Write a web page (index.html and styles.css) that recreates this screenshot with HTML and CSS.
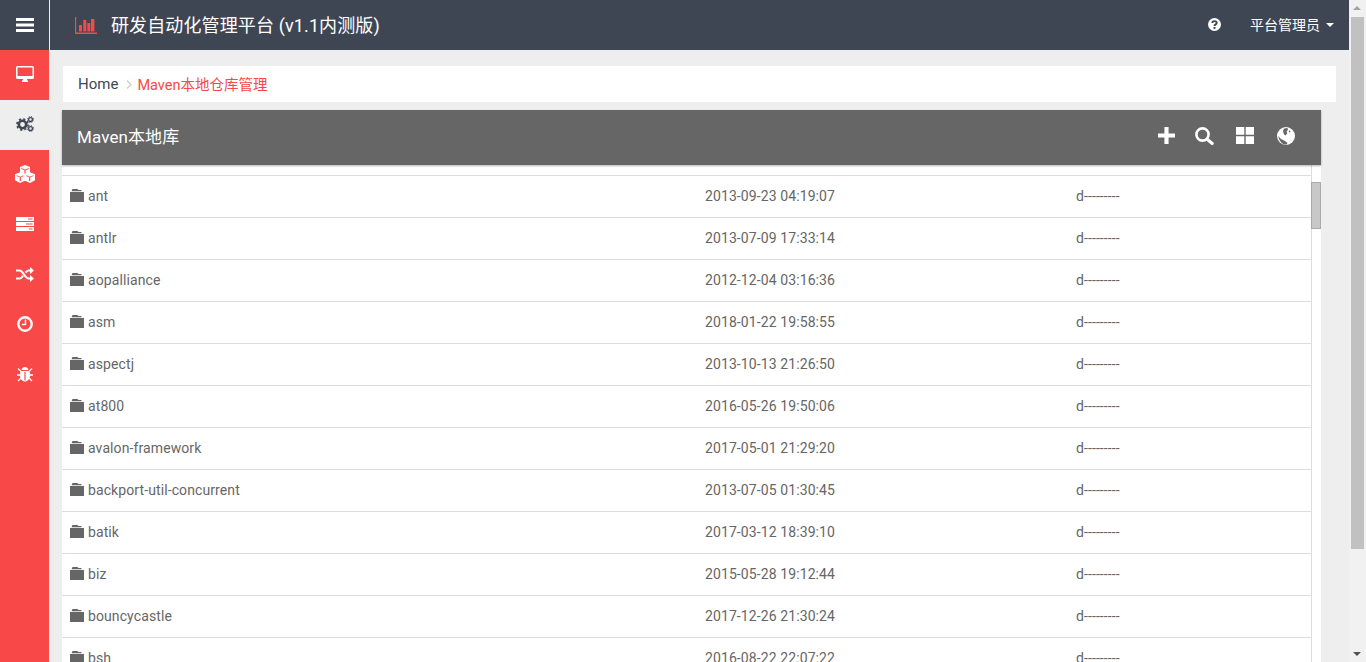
FILE: index.html
```html
<!DOCTYPE html>
<html lang="zh-CN">
<head>
<meta charset="UTF-8">
<meta name="viewport" content="width=device-width, initial-scale=1.0">
<title>研发自动化管理平台</title>
<link rel="stylesheet" href="styles.css">
</head>
<body>
<div class="page">
  <div class="main">
    <header class="topbar">
      <a class="toggle">
        <svg width="18" height="14" viewBox="0 0 18 14"><path fill="#fff" d="M0 0h18v3H0zM0 5.500h18v3H0zM0 11h18v3H0z"/></svg>
      </a>
      <div class="brand">
        <svg width="22" height="17" viewBox="0 0 22 17"><path fill="#f94848" d="M0 0h1.200v15.600H22V17H0z"/><path fill="#f94848" d="M4 8h3v6.600H4zM8.300 3h3v11.600h-3zM12.300 6h3v8.600h-3zM16 2h3.400v12.600H16z"/></svg>
        <h1>研发自动化管理平台 (v1.1内测版)</h1>
      </div>
      <div class="topright">
        <svg width="13" height="13" viewBox="0 0 13 13"><circle cx="6.500" cy="6.500" r="6.500" fill="#fff"/><path fill="none" stroke="#3f4653" stroke-width="1.900" d="M4.300 5.100c0-1.300 1-2 2.200-2s2.200.7 2.200 1.800c0 1.500-2.200 1.400-2.200 3"/><path fill="#3f4653" d="M5.500 9h2v1.900h-2z"/></svg>
        <span class="user">平台管理员</span>
        <span class="caret"></span>
      </div>
    </header>

    <div class="body">
      <nav class="sidebar">
        <a class="navitem">
          <svg width="18" height="16" viewBox="0 0 18 16"><path fill="#fff" fill-rule="evenodd" d="M1.500 0h15A1.500 1.500 0 0 1 18 1.500v10a1.500 1.500 0 0 1-1.500 1.500H11c0 1 .4 1.500 1 2v1H6v-1c.6-.5 1-1 1-2H1.500A1.500 1.500 0 0 1 0 11.500v-10A1.500 1.500 0 0 1 1.500 0zM1.500 1.500V10h15V1.500z"/></svg>
        </a>
        <a class="navitem current">
          <svg width="18" height="16" viewBox="0 0 18 16"><g fill="none" stroke="#3f4653"><circle cx="6.500" cy="8.500" r="3.700" stroke-width="2.600"/><circle cx="6.500" cy="8.500" r="5.600" stroke-width="1.600" stroke-dasharray="2.200 2.200"/><circle cx="14.500" cy="3.500" r="1.900" stroke-width="1.300"/><circle cx="14.500" cy="3.500" r="3" stroke-width="1" stroke-dasharray="1.200 1.160"/><circle cx="14.500" cy="12.500" r="1.900" stroke-width="1.300"/><circle cx="14.500" cy="12.500" r="3" stroke-width="1" stroke-dasharray="1.200 1.160"/></g></svg>
        </a>
        <a class="navitem">
          <svg width="20" height="18" viewBox="0 0 20 18"><path fill="#fff" d="M10 0l5 2v5.200l5 2v6L15 18l-5-2.200L5 18l-5-2.800v-6l5-2V2z"/><path fill="#f94848" d="M6.300 3.100L10 4.600l3.700-1.500v.9L10.600 5.300v3.200H9.400V5.300L6.300 4zM1.500 10.200l3.800 1.500 3.200-1.400v.9l-2.600 1.100v3.800H4.700v-3.800l-3.200-1.200zM11.500 10.300l3.200 1.400 3.800-1.500v.9l-3.200 1.200v3.800h-1.200v-3.800l-2.600-1.100z"/></svg>
        </a>
        <a class="navitem">
          <svg width="18" height="14" viewBox="0 0 18 14"><path fill="#fff" d="M0 0h18v4H0zM0 5h18v4H0zM0 10h18v4H0z"/><path fill="#f94848" d="M12 1.500h4.500v1H12zM10 6.500h6.500v1H10zM13 11.500h3.500v1H13z"/></svg>
        </a>
        <a class="navitem">
          <svg width="18" height="15" viewBox="0 0 18 15"><path fill="none" stroke="#fff" stroke-width="2.200" d="M0 3.500h3.500c3.500 0 5.500 8 9 8H15M0 11.500h3.500c1.500 0 2.600-1.300 3.500-2.800M9.400 5.600C10.300 4.500 11.300 3.500 12.500 3.500H15"/><path fill="#fff" d="M14 0l4 3.500-4 3.500zM14 8l4 3.500-4 3.500z"/></svg>
        </a>
        <a class="navitem">
          <svg width="16" height="16" viewBox="0 0 16 16"><circle cx="8" cy="8" r="6.700" fill="none" stroke="#fff" stroke-width="2.400"/><path fill="#fff" d="M7.800 3.500h1.400v5.700H4.800V7.800h3z"/></svg>
        </a>
        <a class="navitem">
          <svg width="16" height="16" viewBox="0 0 16 16"><path fill="#fff" d="M4.500 4C5 1.800 6.400 1 8 1s3 .8 3.500 3zM4 5h8c.8.5 1 2 1 4.500 0 3.500-2.500 6-5 6s-5-2.500-5-6C3 7 3.200 5.500 4 5z"/><path fill="none" stroke="#fff" stroke-width="1.300" d="M1 2.500L4 5.500M15 2.500L12 5.500M0 9h3M13 9h3M1 15l3-3M15 15l-3-3"/><path fill="#f94848" d="M7.400 6h1.200v8.500H7.400z"/></svg>
        </a>
      </nav>

      <section class="content">
        <div class="crumbs">
          <span class="home">Home</span>
          <svg class="sep" width="6" height="9" viewBox="0 0 6 9"><path fill="none" stroke="#ccc" stroke-width="1.200" d="M1 .5l4 4-4 4"/></svg>
          <span class="here">Maven本地仓库管理</span>
        </div>

        <div class="panel">
          <div class="panel-head">
            <h2>Maven本地库</h2>
            <div class="tools">
              <svg width="17" height="17" viewBox="0 0 18 18"><path fill="#fff" d="M6.800 0h4.400v6.800H18v4.400h-6.800V18H6.800v-6.800H0V6.800h6.800z"/></svg>
              <svg width="19" height="18" viewBox="0 0 19 18"><circle cx="7.500" cy="7.500" r="6.100" fill="none" stroke="#fff" stroke-width="2.600"/><path fill="none" stroke="#fff" stroke-width="3" stroke-linecap="round" d="M12.500 12.500l4.700 4"/></svg>
              <svg class="tool-grid" width="18" height="17" viewBox="0 0 18 17"><path fill="#fff" d="M0 0h8.300v7.800H0zM9.700 0H18v7.800H9.700zM0 9.200h8.300V17H0zM9.700 9.200H18V17H9.700z"/></svg>
              <svg class="tool-globe" width="18" height="18" viewBox="0 0 18 18"><circle cx="9" cy="9" r="9" fill="#fff"/><path fill="#666" d="M7 1.500l3.500-.6.500 2-1.500 1.300.8 2-1.800 2.300-1.700-1.500-.8-3zM1.200 9l2.800 3 4 2 2.500 2-1 1.600C5.500 17.800 2 14 1.200 9zM12 3.500l1.500.5-.5 1.500-1.200-.6z"/></svg>
            </div>
          </div>

          <div class="listwrap">
            <div class="list" id="list"></div>
            <div class="inner-scroll"><div class="inner-thumb"></div></div>
          </div>
        </div>
      </section>
    </div>
  </div>

  <div class="pagescroll">
    <span class="arrow up"></span>
    <div class="pagethumb"></div>
    <span class="arrow down"></span>
  </div>
</div>

<script>
  var rows = [
    ["ant", "2013-09-23 04:19:07"],
    ["antlr", "2013-07-09 17:33:14"],
    ["aopalliance", "2012-12-04 03:16:36"],
    ["asm", "2018-01-22 19:58:55"],
    ["aspectj", "2013-10-13 21:26:50"],
    ["at800", "2016-05-26 19:50:06"],
    ["avalon-framework", "2017-05-01 21:29:20"],
    ["backport-util-concurrent", "2013-07-05 01:30:45"],
    ["batik", "2017-03-12 18:39:10"],
    ["biz", "2015-05-28 19:12:44"],
    ["bouncycastle", "2017-12-26 21:30:24"],
    ["bsh", "2016-08-22 22:07:22"]
  ];
  var folder = '<svg class="folder" width="14" height="13" viewBox="0 0 14 13"><path fill="#666" d="M2.500 0h5l1 1h3v1.200H1.500zM0 3h14v9.500a.5.500 0 0 1-.5.500H.5a.5.500 0 0 1-.5-.5z"/></svg>';
  var html = "";
  rows.forEach(function(r) {
    html += '<div class="row"><div class="name">' + folder + '<span>' + r[0] + '</span></div>' +
      '<div>' + r[1] + '</div><div>d---------</div></div>';
  });
  document.getElementById("list").innerHTML = html;
</script>
</body>
</html>
```

FILE: styles.css
```css
* {
  box-sizing: border-box;
}

html, body {
  margin: 0;
  height: 100%;
  overflow: hidden;
}

body {
  font-family: Roboto, "Noto Sans CJK SC", sans-serif;
  font-size: 14px;
  color: #666;
  background-color: #eee;
}

h1, h2 {
  margin: 0;
  font-weight: 400;
}

.page {
  display: flex;
  height: 662px;
}

.main {
  flex: 1;
  min-width: 0;
  display: flex;
  flex-direction: column;
}

/* top bar */
.topbar {
  height: 50px;
  flex: none;
  display: flex;
  align-items: center;
  background-color: #3f4653;
  color: white;
}

.toggle {
  width: 50px;
  height: 50px;
  display: flex;
  align-items: center;
  justify-content: center;
  border-right: 1px solid #eee;
}

.brand {
  display: flex;
  align-items: center;
  gap: 14px;
  margin-left: 25px;
}

.brand h1 {
  font-size: 18px;
  letter-spacing: 0.12px;
  padding-bottom: 2px;
}

.topright {
  margin-left: auto;
  display: flex;
  align-items: center;
  padding-right: 15px;
  padding-bottom: 1px;
}

.user {
  font-size: 14px;
  margin-left: 29px;
  padding-bottom: 1px;
}

.caret {
  margin-left: 6px;
  border-top: 4px solid white;
  border-left: 4px solid transparent;
  border-right: 4px solid transparent;
}

/* sidebar and content */
.body {
  flex: 1;
  min-height: 0;
  display: flex;
}

.sidebar {
  width: 49px;
  flex: none;
  background-color: #f94848;
}

.navitem {
  height: 50px;
  display: flex;
  align-items: center;
  justify-content: center;
  padding-bottom: 2px;
}

.navitem.current {
  background-color: #eee;
}

.content {
  flex: 1;
  min-width: 0;
  padding: 16px 13px 0 13px;
  overflow: hidden;
}

.crumbs {
  height: 36px;
  margin-left: 1px;
  padding-left: 15px;
  display: flex;
  align-items: center;
  background-color: white;
  font-size: 15px;
}

.home {
  color: #3f4653;
}

.sep {
  margin: 1px 5px 0 8px;
}

.here {
  color: #f94848;
  font-size: 14.5px;
  padding-bottom: 1px;
}

.panel {
  margin-top: 8px;
  margin-right: 15px;
  background-color: white;
}

.panel-head {
  position: relative;
  height: 55px;
  padding: 0 26px 0 15px;
  display: flex;
  align-items: center;
  justify-content: space-between;
  background-color: #666;
  color: white;
  box-shadow: 0 1px 2px rgba(0, 0, 0, 0.3);
}

.panel-head h2 {
  font-size: 17px;
  letter-spacing: 0.1px;
  padding-bottom: 4px;
}

.tools {
  display: flex;
  align-items: center;
  gap: 20px;
  margin-bottom: 4px;
}

.tool-grid {
  margin-left: 2px;
}

.tool-globe {
  margin-left: 3px;
}

.listwrap {
  display: flex;
  height: 497px;
  overflow: hidden;
}

.list {
  flex: 1;
  min-width: 0;
  padding-top: 10px;
  border-right: 1px solid #ddd;
  letter-spacing: 0.1px;
}

.row {
  height: 42px;
  padding-bottom: 2px;
  display: grid;
  grid-template-columns: 643px 371px 1fr;
  align-items: center;
  border-top: 1px solid #ddd;
}

.name {
  display: flex;
  align-items: center;
  gap: 4px;
  padding-left: 8px;
}

.inner-scroll {
  width: 9px;
  flex: none;
  padding-top: 17px;
}

.inner-thumb {
  height: 47px;
  margin-left: -1px;
  width: 10px;
  background-color: #c8c8c8;
  border: 1px solid #aaa;
}

/* page scrollbar */
.pagescroll {
  width: 17px;
  flex: none;
  position: relative;
  background-color: #f1f1f1;
}

.pagethumb {
  position: absolute;
  top: 17px;
  left: 2px;
  width: 13px;
  height: 532px;
  background-color: #c1c1c1;
}

.arrow {
  position: absolute;
  left: 4px;
  border-left: 4px solid transparent;
  border-right: 4px solid transparent;
}

.arrow.up {
  top: 6px;
  border-bottom: 4px solid #a3a3a3;
}

.arrow.down {
  bottom: 6px;
  border-top: 4px solid #505050;
}
```
